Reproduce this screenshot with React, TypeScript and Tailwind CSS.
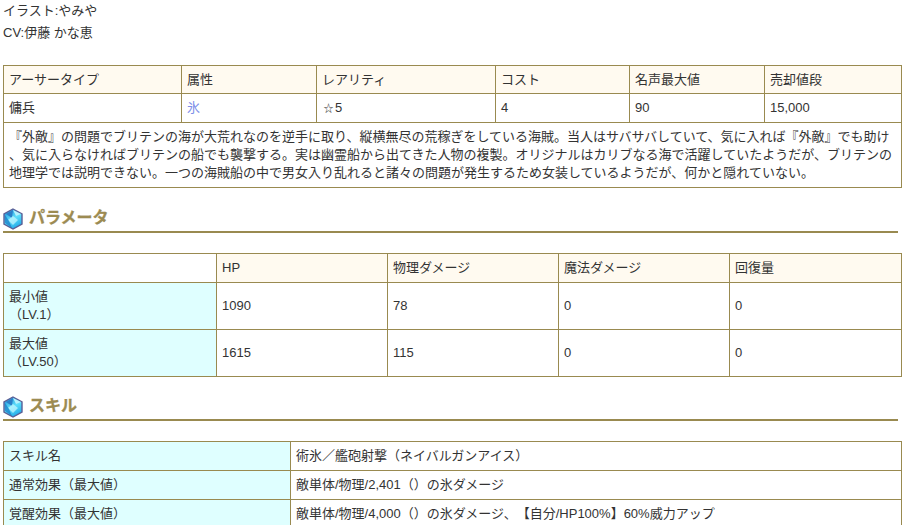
import React from "react";

const td = "border border-[#998a50] px-[5px] py-0 align-middle font-normal text-left";

function Gem({ id }: { id: string }) {
  return (
    <svg width="20" height="22" viewBox="0 0 20 22" className="shrink-0">
      <defs>
        <linearGradient id={id} x1="0.2" y1="0" x2="0.7" y2="1">
          <stop offset="0" stopColor="#1c8fd8" />
          <stop offset="0.5" stopColor="#5fe0fb" />
          <stop offset="1" stopColor="#1aa5e6" />
        </linearGradient>
      </defs>
      <polygon points="10,1 19,6 19,16 10,21 1,16 1,6" fill={`url(#${id})`} stroke="#5a5f96" strokeWidth="1.4" />
      <polygon points="10,2 3,6 9,10" fill="#2a7fc8" />
      <polygon points="10,2 18,6 13,8" fill="#b6f2fd" />
      <polygon points="5,12 10,8 15,12 10,17" fill="#c9f8ff" opacity="0.7" />
      <polygon points="2,7 2,15 9,20 6,13" fill="#1678c4" opacity="0.7" />
    </svg>
  );
}

function Heading({ id, children }: { id: string; children: React.ReactNode }) {
  return (
    <h2 className="ml-[3px] mr-[5px] flex h-[25px] items-center gap-[6px] border-b-[2px] border-[#998a50] pb-[2px] text-[16px] font-bold leading-[22px] text-[#9c8b52] [-webkit-text-stroke:0.3px_#9c8b52]">
      <Gem id={id} />
      <span className="-mt-[2px]">{children}</span>
    </h2>
  );
}

export default function App() {
  return (
    <div
      className="h-[525px] w-[903px] overflow-hidden bg-white text-[13px] leading-[18px] text-[#333333] [text-spacing-trim:space-all]"
      style={{ fontFamily: '"Liberation Sans", "Noto Sans CJK JP", sans-serif' }}
    >
      <p className="ml-[3px] pt-[2px]">イラスト:やみや</p>
      <p className="ml-[3px] mt-[4px]">CV:伊藤 かな恵</p>

      <table className="ml-[3px] mt-[23px] w-[898px] table-fixed border-collapse">
        <colgroup>
          <col className="w-[178px]" />
          <col className="w-[135px]" />
          <col className="w-[179px]" />
          <col className="w-[134px]" />
          <col className="w-[135px]" />
          <col className="w-[137px]" />
        </colgroup>
        <tbody>
          <tr className="h-[28px] bg-[#fffaf0]">
            {["アーサータイプ", "属性", "レアリティ", "コスト", "名声最大値", "売却値段"].map((h) => (
              <th key={h} className={td}>{h}</th>
            ))}
          </tr>
          <tr className="h-[29px]">
            <td className={td}>傭兵</td>
            <td className={td}><span className="text-[#7d8fe8]">氷</span></td>
            <td className={td}><span className="inline-block w-[13px] text-center text-[10px]">☆</span>5</td>
            <td className={td}>4</td>
            <td className={td}>90</td>
            <td className={td}>15,000</td>
          </tr>
          <tr className="h-[65px]">
            <td colSpan={6} className={td}>
              　『外敵』の問題でブリテンの海が大荒れなのを逆手に取り、縦横無尽の荒稼ぎをしている海賊。当人はサバサバしていて、気に入れば『外敵』でも助け
              、気に入らなければブリテンの船でも襲撃する。実は幽霊船から出てきた人物の複製。オリジナルはカリブなる海で活躍していたようだが、ブリテンの
              地理学では説明できない。一つの海賊船の中で男女入り乱れると諸々の問題が発生するため女装しているようだが、何かと隠れていない。
            </td>
          </tr>
        </tbody>
      </table>

      <div className="mt-[20px]">
        <Heading id="gem-a">パラメータ</Heading>
      </div>

      <table className="ml-[3px] mt-[20px] w-[898px] table-fixed border-collapse">
        <colgroup>
          <col className="w-[213px]" />
          <col className="w-[171px]" />
          <col className="w-[171px]" />
          <col className="w-[171px]" />
          <col className="w-[172px]" />
        </colgroup>
        <tbody>
          <tr className="h-[29px]">
            <td className={td}></td>
            {["HP", "物理ダメージ", "魔法ダメージ", "回復量"].map((h) => (
              <th key={h} className={`${td} bg-[#fffaf0]`}>{h}</th>
            ))}
          </tr>
          <tr className="h-[47px]">
            <td className={`${td} bg-[#dfffff]`}>最小値<br />（LV.1）</td>
            <td className={td}>1090</td>
            <td className={td}>78</td>
            <td className={td}>0</td>
            <td className={td}>0</td>
          </tr>
          <tr className="h-[47px]">
            <td className={`${td} bg-[#dfffff]`}>最大値<br />（LV.50）</td>
            <td className={td}>1615</td>
            <td className={td}>115</td>
            <td className={td}>0</td>
            <td className={td}>0</td>
          </tr>
        </tbody>
      </table>

      <div className="mt-[19px]">
        <Heading id="gem-b">スキル</Heading>
      </div>

      <table className="ml-[3px] mt-[20px] w-[898px] table-fixed border-collapse">
        <colgroup>
          <col className="w-[287px]" />
          <col className="w-[611px]" />
        </colgroup>
        <tbody>
          {[
            ["スキル名", "術氷／艦砲射撃（ネイバルガンアイス）"],
            ["通常効果（最大値）", "敵単体/物理/2,401（）の氷ダメージ"],
            ["覚醒効果（最大値）", "敵単体/物理/4,000（）の氷ダメージ、【自分/HP100%】60%威力アップ"],
          ].map(([a, b]) => (
            <tr key={a} className="h-[29px]">
              <td className={`${td} bg-[#dfffff]`}>{a}</td>
              <td className={td}>{b}</td>
            </tr>
          ))}
        </tbody>
      </table>
    </div>
  );
}
